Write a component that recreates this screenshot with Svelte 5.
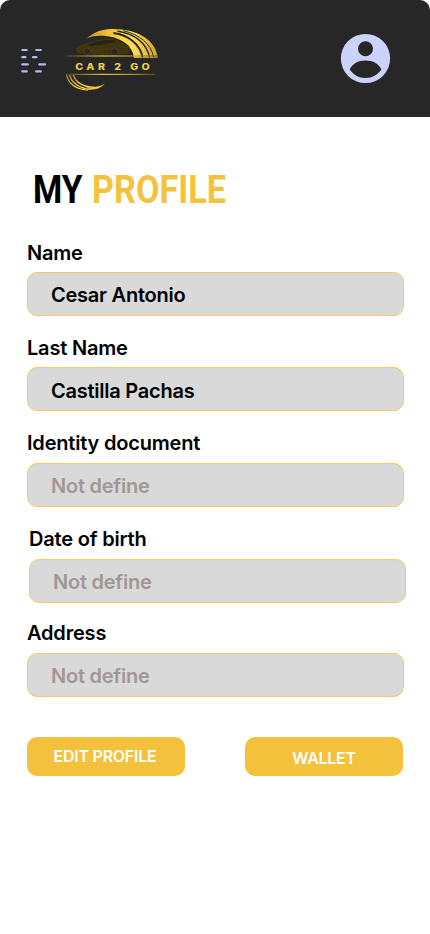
<script>
  const fields = [
    { label: 'Name', value: 'Cesar Antonio', filled: true, gap: 0, low: true },
    { label: 'Last Name', value: 'Castilla Pachas', filled: true, gap: 51, low: true, lowered: true },
    { label: 'Identity document', value: 'Not define', gap: 52 },
    { label: 'Date of birth', value: 'Not define', gap: 52, shifted: true },
    { label: 'Address', value: 'Not define', gap: 50 }
  ];
</script>

<div class="screen">
  <header>
    <svg class="menu" width="28" height="28" viewBox="0 0 28 28" fill="none" stroke="#a9bfee" stroke-width="2.2" stroke-linecap="round" role="img" aria-label="Menu">
      <path d="M2.3 3H6.7M16.2 3H20.8M2.3 10.2H5.5M13 10.2H16.4M2.3 17.4H7.8M19.3 17.4H25M2.3 24.4H6.7M16.2 24.4H20.8" />
    </svg>
    <svg class="logo" width="105" height="75" viewBox="0 0 315 225" role="img" aria-label="Car 2 Go">
      <defs>
        <linearGradient id="gold" x1="0" x2="1">
          <stop offset="0" stop-color="#b88e20" />
          <stop offset=".3" stop-color="#efc42f" />
          <stop offset=".65" stop-color="#ffdf55" />
          <stop offset="1" stop-color="#d3a528" />
        </linearGradient>
        <linearGradient id="line" gradientUnits="userSpaceOnUse" x1="16" y1="0" x2="294" y2="0">
          <stop offset="0" stop-color="#4b3c17" />
          <stop offset=".4" stop-color="#ffe044" />
          <stop offset=".7" stop-color="#d9ad29" />
          <stop offset="1" stop-color="#5b4717" />
        </linearGradient>
      </defs>
      <path d="M78 57C100 36 128 26 158 27C235 27 288 62 293 113H222C218 70 166 43 112 48C97 49 87 52 78 57Z" fill="url(#gold)" />
      <g fill="none" stroke="#272727">
        <path d="M160 39C205 45 240 72 248 112" stroke-width="6" />
        <path d="M172 33C225 42 258 66 269 112" stroke-width="4" />
        <path d="M190 32C240 45 272 70 281 112" stroke-width="3" />
      </g>
      <g fill="none" stroke="url(#gold)" stroke-width="4">
        <path d="M20 165C24 190 48 209 84 210" />
        <path d="M29 165C34 188 58 206 92 208" />
        <path d="M40 165C46 187 70 202 105 202" />
        <path d="M75 207C98 211 119 207 133 193C118 201 99 203 82 202Z" stroke-width="1" fill="url(#gold)" />
      </g>
      <path d="M48 86C60 70 91 67 106 64C126 53 160 53 175 63L203 74C211 79 209 92 208 99L177 104C174 82 151 82 149 104L94 105C94 83 69 83 67 101L51 98Z" fill="#40350f" />
      <path d="M81 78C102 65 128 58 158 60L171 67C144 70 117 76 94 78Z" fill="#262415" />
      <g fill="none" stroke="#51410d" stroke-width="3">
        <ellipse cx="81" cy="94" rx="10" ry="11" />
        <ellipse cx="163" cy="95" rx="11" ry="12" />
        <path d="M92 91L146 88M176 80L204 83" />
      </g>
      <path d="M16 108H294M16 163H285" stroke="url(#line)" stroke-width="3" />
      <g transform="translate(46 149) scale(1.22 1)">
        <text x="0" y="0" textLength="183" lengthAdjust="spacing">CAR 2 GO</text>
      </g>
    </svg>
    <svg class="avatar" width="50" height="50" viewBox="0 0 50 50" role="img" aria-label="Account">
      <circle cx="25.5" cy="24.5" r="24.6" fill="#ccd3fb" />
      <circle cx="25.5" cy="14.8" r="7.5" fill="#272727" />
      <path d="M9.6 35.8C13 30 17.5 26.9 25.5 26.9S38 30 41.5 35.8C37.5 41 32.5 44.3 25.5 44.3S13.5 41 9.6 35.8Z" transform="translate(0 -.3)" fill="#272727" />
    </svg>
  </header>

  <main>
    <h1>
      <svg width="200" height="44" viewBox="0 0 200 44">
        <text x="4" y="36.5" font-weight="700" fill="#000" textLength="49.5" lengthAdjust="spacingAndGlyphs">MY</text>
        <text x="63" y="36.5" font-weight="700" fill="#f5c23e" textLength="134" lengthAdjust="spacingAndGlyphs">PROFILE</text>
      </svg>
    </h1>
    <form>
      {#each fields as f}
        <div class="field" class:shifted={f.shifted} style:--gap="{f.gap}px">
          <span class="label" class:low={f.low}>{f.label}</span>
          <div class="box" class:filled={f.filled} class:lowered={f.lowered}>{f.value}</div>
        </div>
      {/each}
      <div class="actions">
        <button type="button" class="edit">EDIT PROFILE</button>
        <button type="button" class="wallet">WALLET</button>
      </div>
    </form>
  </main>
</div>

<style>
  :global(body) { background: #fff; }
  .screen { width: 430px; height: 934px; overflow: hidden; background: #fff; font-family: Inter, sans-serif; }
  header { box-sizing: border-box; height: 117px; background: #272727; border-radius: 10px 10px 0 0; display: flex; align-items: flex-start; padding-left: 20px; }
  svg { display: block; overflow: visible; }
  .menu { margin-top: 47px; }
  .logo { margin: 20px 0 0 12px; }
  .logo text { font: 800 26px Inter, sans-serif; fill: #f2d047; }
  .avatar { margin: 34px 0 0 175px; }
  main { padding: 49px 0 0 27px; }
  h1 { margin: 0; height: 44px; padding-left: 2px; }
  h1 text { font-family: Roboto, sans-serif; font-size: 39.5px; }
  form { padding-top: 30px; }
  .field { display: flex; flex-direction: column; width: 377px; height: 76px; }
  .field + .field { margin-top: calc(var(--gap) - 32px); }
  .shifted { margin-left: 2px; }
  .label { height: 32px; line-height: 25px; font-size: 20px; font-weight: 600; letter-spacing: -.19px; color: #000; white-space: nowrap; }
  .low { line-height: 27px; }
  .box { box-sizing: border-box; height: 44px; border: 1px solid #f3cb62; border-radius: 10px; background: #d9d9d9; padding-left: 23px; font-size: 20px; font-weight: 600; letter-spacing: -.24px; line-height: 45px; color: #a39695; }
  .filled { color: #000; }
  .lowered { line-height: 46px; }
  .actions { display: flex; gap: 60px; margin-top: 40px; }
  button { width: 158px; height: 39px; padding: 0; border: 0; border-radius: 10px; background: #f4c13d; color: #fff; font: 600 16px/39px Inter, sans-serif; letter-spacing: -.25px; }
  .edit { padding-right: 2px; }
  .wallet { padding-top: 4px; line-height: 35px; }
</style>
